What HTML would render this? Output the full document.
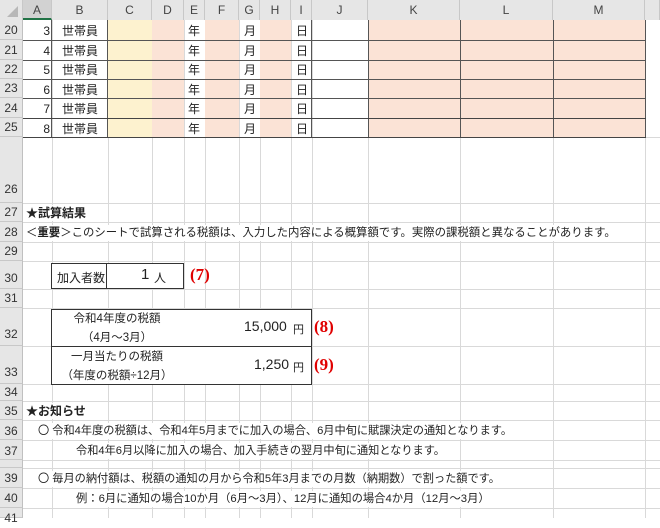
<!DOCTYPE html>
<html><head><meta charset="utf-8"><style>
*{margin:0;padding:0;box-sizing:border-box}
body{width:660px;height:518px;overflow:hidden;background:#fff;position:relative;font-family:"Liberation Sans","Noto Sans CJK JP",sans-serif;font-size:12px;color:#222}
div{position:absolute}
.v{width:1px;background:#d9d9d9}
.h{height:1px;background:#d9d9d9;left:0;width:660px}
.hd{top:0;height:20px;background:#e6e6e6;color:#444;text-align:center;line-height:20px;font-size:12px;border-right:1px solid #c8c8c8}
.rh{left:0;width:23px;background:#e6e6e6;color:#333;text-align:center;font-size:12px;border-bottom:1px solid #c8c8c8;border-right:1px solid #c0c0c0}
.t{white-space:nowrap}
.red{color:#e00000;font-weight:bold;font-family:"Liberation Serif","Noto Serif CJK SC",serif;font-size:17px}
</style></head><body>
<div class="v" style="left:52px;top:20px;height:498px"></div>
<div class="v" style="left:108px;top:20px;height:498px"></div>
<div class="v" style="left:152px;top:20px;height:498px"></div>
<div class="v" style="left:184px;top:20px;height:498px"></div>
<div class="v" style="left:205px;top:20px;height:498px"></div>
<div class="v" style="left:239px;top:20px;height:498px"></div>
<div class="v" style="left:260px;top:20px;height:498px"></div>
<div class="v" style="left:291px;top:20px;height:498px"></div>
<div class="v" style="left:312px;top:20px;height:498px"></div>
<div class="v" style="left:368px;top:20px;height:498px"></div>
<div class="v" style="left:460px;top:20px;height:498px"></div>
<div class="v" style="left:553px;top:20px;height:498px"></div>
<div class="v" style="left:645px;top:20px;height:498px"></div>
<div class="h" style="top:137px"></div><div class="h" style="top:203px"></div><div class="h" style="top:222px"></div><div class="h" style="top:242px"></div><div class="h" style="top:261px"></div><div class="h" style="top:289px"></div><div class="h" style="top:308px"></div><div class="h" style="top:346px"></div><div class="h" style="top:384px"></div><div class="h" style="top:401px"></div><div class="h" style="top:420px"></div><div class="h" style="top:440px"></div><div class="h" style="top:460px"></div><div class="h" style="top:468px"></div><div class="h" style="top:488px"></div><div class="h" style="top:508px"></div>
<div style="left:108px;top:20px;width:44px;height:117px;background:#fdf2cf"></div>
<div style="left:152px;top:20px;width:32px;height:117px;background:#fbe3d6"></div>
<div style="left:205px;top:20px;width:34px;height:117px;background:#fbe3d6"></div>
<div style="left:260px;top:20px;width:31px;height:117px;background:#fbe3d6"></div>
<div style="left:368px;top:20px;width:277px;height:117px;background:#fbe3d6"></div>
<div style="left:368px;top:20px;width:278px;height:118px;border:1px solid #555;border-top:none"></div>
<div style="left:51px;top:20px;width:1px;height:117px;background:#555"></div>
<div style="left:107px;top:20px;width:1px;height:117px;background:#555"></div>
<div style="left:311px;top:20px;width:1px;height:117px;background:#555"></div>
<div style="left:460px;top:20px;width:1px;height:117px;background:#555"></div>
<div style="left:553px;top:20px;width:1px;height:117px;background:#555"></div>
<div style="left:23px;top:40px;width:623px;height:1px;background:#555"></div>
<div style="left:23px;top:60px;width:623px;height:1px;background:#555"></div>
<div style="left:23px;top:79px;width:623px;height:1px;background:#555"></div>
<div style="left:23px;top:98px;width:623px;height:1px;background:#555"></div>
<div style="left:23px;top:118px;width:623px;height:1px;background:#444"></div>
<div style="left:23px;top:137px;width:623px;height:1px;background:#444"></div>
<div class="t" style="left:23px;top:22px;width:27px;text-align:right;line-height:19.5px">3<br>4<br>5<br>6<br>7<br>8</div>
<div class="t" style="left:62px;top:22px;line-height:19.5px">世帯員<br>世帯員<br>世帯員<br>世帯員<br>世帯員<br>世帯員</div>
<div class="t" style="left:188px;top:22px;line-height:19.5px">年<br>年<br>年<br>年<br>年<br>年</div>
<div class="t" style="left:244px;top:22px;line-height:19.5px">月<br>月<br>月<br>月<br>月<br>月</div>
<div class="t" style="left:296px;top:22px;line-height:19.5px">日<br>日<br>日<br>日<br>日<br>日</div>
<div class="hd" style="left:0;width:23px"><svg width="23" height="20"><polygon points="18,6 18,17 7,17" fill="#b8b8b8"/></svg></div>
<div class="hd" style="left:23px;width:29px;border-bottom:2px solid #217346;background:#d2d2d2">A</div>
<div class="hd" style="left:52px;width:56px">B</div>
<div class="hd" style="left:108px;width:44px">C</div>
<div class="hd" style="left:152px;width:32px">D</div>
<div class="hd" style="left:184px;width:21px">E</div>
<div class="hd" style="left:205px;width:34px">F</div>
<div class="hd" style="left:239px;width:21px">G</div>
<div class="hd" style="left:260px;width:31px">H</div>
<div class="hd" style="left:291px;width:21px">I</div>
<div class="hd" style="left:312px;width:56px">J</div>
<div class="hd" style="left:368px;width:92px">K</div>
<div class="hd" style="left:460px;width:93px">L</div>
<div class="hd" style="left:553px;width:92px">M</div>
<div class="hd" style="left:645px;width:15px"></div>
<div class="rh" style="top:20px;height:20px;line-height:20px">20</div>
<div class="rh" style="top:40px;height:20px;line-height:20px">21</div>
<div class="rh" style="top:60px;height:19px;line-height:19px">22</div>
<div class="rh" style="top:79px;height:19px;line-height:19px">23</div>
<div class="rh" style="top:98px;height:20px;line-height:20px">24</div>
<div class="rh" style="top:118px;height:19px;line-height:19px">25</div>
<div class="rh" style="top:137px;height:66px;line-height:104px">26</div>
<div class="rh" style="top:203px;height:19px;line-height:19px">27</div>
<div class="rh" style="top:222px;height:20px;line-height:21px">28</div>
<div class="rh" style="top:242px;height:19px;line-height:19px">29</div>
<div class="rh" style="top:261px;height:28px;line-height:34px">30</div>
<div class="rh" style="top:289px;height:19px;line-height:19px">31</div>
<div class="rh" style="top:308px;height:38px;line-height:52px">32</div>
<div class="rh" style="top:346px;height:38px;line-height:52px">33</div>
<div class="rh" style="top:384px;height:17px;line-height:17px">34</div>
<div class="rh" style="top:401px;height:19px;line-height:21px">35</div>
<div class="rh" style="top:420px;height:20px;line-height:22px">36</div>
<div class="rh" style="top:440px;height:20px;line-height:22px">37</div>
<div class="rh" style="top:460px;height:8px;line-height:8px;font-size:6px"></div>
<div class="rh" style="top:468px;height:20px;line-height:20px">39</div>
<div class="rh" style="top:488px;height:20px;line-height:20px">40</div>
<div class="rh" style="top:508px;height:10px;line-height:20px">41</div>
<div class="t" style="left:26px;top:205px;font-weight:bold;background:#fff;padding-right:4px;line-height:16px">★試算結果</div>
<div class="t" style="left:26px;top:225px;background:#fff;line-height:16px;font-size:11.4px">＜<b>重要</b>＞このシートで試算される税額は、入力した内容による概算額です。実際の課税額と異なることがあります。</div>
<div style="left:51px;top:263px;width:133px;height:26px;border:1px solid #333;background:#fff"></div>
<div style="left:106px;top:263px;width:1px;height:26px;background:#333"></div>
<div class="t" style="left:57px;top:269px;font-size:12px">加入者数</div>
<div class="t" style="left:141px;top:266px;font-size:15px">1</div>
<div class="t" style="left:154px;top:269px">人</div>
<div class="t red" style="left:190px;top:265px">(7)</div>
<div style="left:51px;top:309px;width:261px;height:76px;border:1px solid #333;background:#fff"></div>
<div style="left:51px;top:346px;width:261px;height:1px;background:#333"></div>
<div class="t" style="left:52px;top:310px;width:130px;text-align:center;font-size:11.5px;line-height:19px">令和4年度の税額<br>（4月～3月）</div>
<div class="t" style="left:244px;top:318px;font-size:14px">15,000</div>
<div class="t" style="left:293px;top:321px;font-size:11px">円</div>
<div class="t red" style="left:314px;top:317px">(8)</div>
<div class="t" style="left:52px;top:348px;width:130px;text-align:center;font-size:11.5px;line-height:19px">一月当たりの税額<br>（年度の税額÷12月）</div>
<div class="t" style="left:254px;top:356px;font-size:14px">1,250</div>
<div class="t" style="left:293px;top:359px;font-size:11px">円</div>
<div class="t red" style="left:314px;top:355px">(9)</div>
<div class="t" style="left:26px;top:403px;font-weight:bold;background:#fff;line-height:16px;padding-right:3px">★お知らせ</div>
<div class="t" style="left:38px;top:423px;background:#fff;line-height:16px;font-size:11.2px">〇 令和4年度の税額は、令和4年5月までに加入の場合、6月中旬に賦課決定の通知となります。</div>
<div class="t" style="left:76px;top:443px;background:#fff;line-height:16px;font-size:11.2px">令和4年6月以降に加入の場合、加入手続きの翌月中旬に通知となります。</div>
<div class="t" style="left:38px;top:471px;background:#fff;line-height:16px;font-size:11.2px">〇 毎月の納付額は、税額の通知の月から令和5年3月までの月数（納期数）で割った額です。</div>
<div class="t" style="left:76px;top:491px;background:#fff;line-height:16px;font-size:11.3px">例：6月に通知の場合10か月（6月～3月）、12月に通知の場合4か月（12月～3月）</div>
</body></html>
